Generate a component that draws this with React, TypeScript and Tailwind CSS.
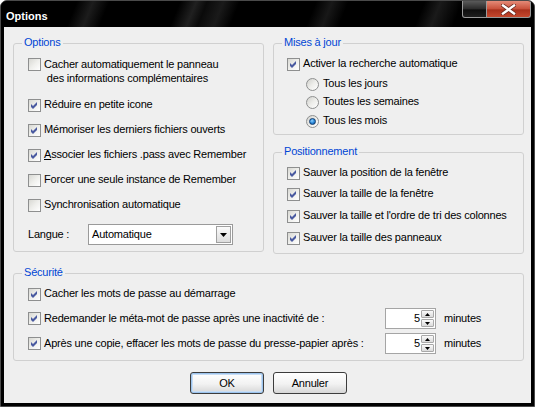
import React from "react";

function Check({ checked }: { checked?: boolean }) {
  return (
    <span className="relative block h-[13px] w-[13px] shrink-0 border border-[#8E8F8F] bg-[linear-gradient(135deg,#D8D8D3_0%,#EFEFEC_50%,#FFFFFF_100%)]">
      {checked && (
        <svg className="absolute left-0 top-0" width="11" height="11" viewBox="0 0 11 11">
          <path d="M2 4 L4 6 L8 2 L8 5 L4 9 L2 7 Z" fill="#4A5AA0" />
        </svg>
      )}
    </span>
  );
}

function Radio({ checked }: { checked?: boolean }) {
  return (
    <span className="flex h-[13px] w-[13px] shrink-0 items-center justify-center rounded-full border border-[#8E8F8F] bg-[linear-gradient(135deg,#D0D0CC_0%,#EDEDEA_50%,#FFFFFF_100%)]">
      {checked && (
        <span className="h-[7px] w-[7px] rounded-full border border-[#103C70] bg-[radial-gradient(circle_at_40%_35%,#8ED0FF_0%,#2C8ADA_50%,#0B4A94_100%)]" />
      )}
    </span>
  );
}

function Group({
  title,
  className,
  children,
}: {
  title: string;
  className?: string;
  children?: React.ReactNode;
}) {
  return (
    <div className={"relative rounded-[3px] border border-[#D0D0D0] " + (className ?? "")}>
      <span className="absolute left-[8px] top-[-8px] bg-[#EFEFEF] px-[2px] leading-[13px] text-[#0046D5]">
        {title}
      </span>
      {children}
    </div>
  );
}

function CRow({
  checked,
  children,
  className,
}: {
  checked?: boolean;
  children: React.ReactNode;
  className?: string;
}) {
  return (
    <div className={"flex h-[13px] items-start gap-[3px] whitespace-nowrap " + (className ?? "")}>
      <Check checked={checked} />
      <span className="leading-[11px]">{children}</span>
    </div>
  );
}

function RRow({
  checked,
  children,
  className,
}: {
  checked?: boolean;
  children: React.ReactNode;
  className?: string;
}) {
  return (
    <div className={"ml-[19px] flex h-[13px] items-start gap-[4px] whitespace-nowrap " + (className ?? "")}>
      <Radio checked={checked} />
      <span className="leading-[11px]">{children}</span>
    </div>
  );
}

function Spinner() {
  return (
    <div className="flex h-[21px] w-[51px] shrink-0 border border-[#A5A5A5] bg-white">
      <div className="flex-1 pr-[1px] text-right leading-[19px]">5</div>
      <div className="my-[1px] mr-[1px] flex w-[13px] flex-col gap-[1px]">
        <div className="flex flex-1 items-center justify-center rounded-[1px] border border-[#A8A8A8] bg-[linear-gradient(#FAFAFA,#DADADA)]">
          <svg width="5" height="3" viewBox="0 0 5 3">
            <path d="M0 3 L2.5 0 L5 3 Z" fill="#000" />
          </svg>
        </div>
        <div className="flex flex-1 items-center justify-center rounded-[1px] border border-[#A8A8A8] bg-[linear-gradient(#FAFAFA,#DADADA)]">
          <svg width="5" height="3" viewBox="0 0 5 3">
            <path d="M0 0 L5 0 L2.5 3 Z" fill="#000" />
          </svg>
        </div>
      </div>
    </div>
  );
}

export default function App() {
  return (
    <div className="h-[407px] w-[535px] bg-white font-['Liberation_Sans',Arial,sans-serif] text-[11px] tracking-[-0.2px] text-black">
      <div className="flex h-full flex-col overflow-hidden rounded-t-[7px] border border-[#4A4A4A] bg-black">
        {/* Title bar */}
        <div className="flex h-[26px] shrink-0 items-start justify-between bg-[linear-gradient(112deg,#000_0%,#000_14%,#1c1c1c_17%,#000_20%,#000_33%,#202020_36%,#0a0a0a_38%,#1a1a1a_41%,#000_44%,#000_58%,#181818_61%,#000_64%,#000_78%,#1a1a1a_81%,#000_85%,#000_100%)] pl-[5px] pr-[3px]">
          <span className="mt-[9px] text-[11px] font-bold leading-[13px] tracking-normal text-white">
            Options
          </span>
          <div className="flex">
            <div className="h-[17px] w-[25px] rounded-bl-[3px] border border-t-0 border-[#9A9A9A] bg-[linear-gradient(#5A5A5A,#2A2A2A_50%,#0E0E0E_55%,#1E1E1E)]" />
            <div className="flex h-[17px] w-[44px] items-center justify-center rounded-br-[3px] border border-l-0 border-t-0 border-[#9A9A9A] bg-[linear-gradient(#E58B78,#C8503A_50%,#A8301C_55%,#C4482E)]">
              <svg width="15" height="11" viewBox="0 0 15 11">
                <path d="M2 1.5 L13 9.5 M13 1.5 L2 9.5" stroke="#6A2A20" strokeWidth="4" strokeLinecap="square" />
                <path d="M2 1.5 L13 9.5 M13 1.5 L2 9.5" stroke="#FFFFFF" strokeWidth="2.4" strokeLinecap="square" />
              </svg>
            </div>
          </div>
        </div>

        {/* Client area */}
        <div className="mx-[3px] mb-[3px] flex flex-1 flex-col bg-[#EFEFEF] pl-[9px] pr-[7px] pt-[16px]">
          <div className="flex items-start gap-[9px]">
            <Group title="Options" className="h-[209px] w-[251px] pl-[14px] pt-[14px]">
              <div className="flex items-start gap-[3px] whitespace-nowrap">
                <Check />
                <span className="mt-[-1px] leading-[14px]">
                  Cacher automatiquement le panneau
                  <br />
                  &nbsp;des informations complémentaires
                </span>
              </div>
              <CRow checked className="mt-[14px]">Réduire en petite icone</CRow>
              <CRow checked className="mt-[12px]">Mémoriser les derniers fichiers ouverts</CRow>
              <CRow checked className="mt-[12px]">
                <span className="underline underline-offset-[1px]">A</span>ssocier les fichiers .pass avec Remember
              </CRow>
              <CRow className="mt-[12px]">Forcer une seule instance de Remember</CRow>
              <CRow className="mt-[12px]">Synchronisation automatique</CRow>
              <div className="mt-[12px] flex h-[21px] items-center">
                <span className="w-[60px] leading-[21px]">Langue :</span>
                <div className="flex h-[21px] w-[145px] items-center border border-[#9A9A9A] bg-white">
                  <span className="flex-1 pl-[3px] leading-[19px]">Automatique</span>
                  <div className="mr-[1px] flex h-[17px] w-[15px] items-center justify-center border border-[#A0A0A0] bg-[linear-gradient(#FBFBFB,#DDDDDD)]">
                    <svg width="7" height="4" viewBox="0 0 7 4">
                      <path d="M0 0 L7 0 L3.5 4 Z" fill="#000" />
                    </svg>
                  </div>
                </div>
              </div>
            </Group>

            <div className="flex w-[251px] flex-col">
              <Group title="Mises à jour" className="h-[92px] pl-[13px] pt-[14px]">
                <CRow checked>Activer la recherche automatique</CRow>
                <RRow className="mt-[7px]">Tous les jours</RRow>
                <RRow className="mt-[5px]">Toutes les semaines</RRow>
                <RRow checked className="mt-[6px]">Tous les mois</RRow>
              </Group>
              <Group title="Positionnement" className="mt-[17px] h-[102px] pl-[13px] pt-[14px]">
                <CRow checked>Sauver la position de la fenêtre</CRow>
                <CRow checked className="mt-[8px]">Sauver la taille de la fenêtre</CRow>
                <CRow checked className="mt-[9px]">Sauver la taille et l'ordre de tri des colonnes</CRow>
                <CRow checked className="mt-[9px]">Sauver la taille des panneaux</CRow>
              </Group>
            </div>
          </div>

          <Group title="Sécurité" className="mt-[19px] h-[88px] pl-[14px] pt-[14px]">
            <CRow checked>Cacher les mots de passe au démarrage</CRow>
            <div className="mt-[7px] flex h-[21px] items-center">
              <div className="flex w-[357px] items-center gap-[3px] whitespace-nowrap">
                <Check checked />
                <span className="leading-[13px]">Redemander le méta-mot de passe après une inactivité de :</span>
              </div>
              <Spinner />
              <span className="ml-[8px] leading-[21px]">minutes</span>
            </div>
            <div className="mt-[4px] flex h-[21px] items-center">
              <div className="flex w-[357px] items-center gap-[3px] whitespace-nowrap">
                <Check checked />
                <span className="leading-[13px]">Après une copie, effacer les mots de passe du presse-papier après :</span>
              </div>
              <Spinner />
              <span className="ml-[8px] leading-[21px]">minutes</span>
            </div>
          </Group>

          <div className="mt-[11px] flex justify-center gap-[9px]">
            <button className="h-[22px] w-[74px] rounded-[3px] border border-[#3C3C3C] bg-[linear-gradient(#FFFFFF,#F2F2F2_55%,#D6D6D6)] leading-[20px] shadow-[inset_0_0_0_1px_#9CC4EE,inset_0_0_0_2px_#C8DDF4]">
              OK
            </button>
            <button className="h-[22px] w-[74px] rounded-[3px] border border-[#3C3C3C] bg-[linear-gradient(#FFFFFF,#F2F2F2_55%,#D6D6D6)] leading-[20px]">
              Annuler
            </button>
          </div>
        </div>
      </div>
    </div>
  );
}
